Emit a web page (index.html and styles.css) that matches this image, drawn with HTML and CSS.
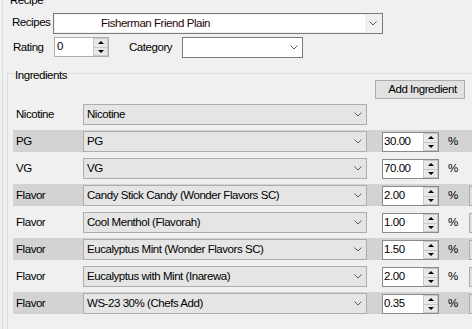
FILE: index.html
```html
<!DOCTYPE html>
<html lang="en">
<head>
    <meta charset="UTF-8">
    <meta name="viewport" content="width=device-width, initial-scale=1.0">
    <title>Recipe</title>
    <link rel="stylesheet" href="styles.css">
</head>
<body>
    <div class="group recipe-group">
        <span class="group-title">Recipe</span>
        <div class="field-row">
            <label class="lbl lbl-recipes">Recipes</label>
            <div class="combo combo-recipes">
                <span class="combo-text">Fisherman Friend Plain</span>
                <span class="chev"><svg width="8" height="5" viewBox="0 0 8 5"><polyline points="0.5,0.5 4,4 7.5,0.5" fill="none" stroke="#5a5a5a" stroke-width="1"/></svg></span>
            </div>
        </div>
        <div class="field-row row-rating">
            <label class="lbl lbl-rating">Rating</label>
            <div class="spin spin-rating">
                <span class="spin-value">0</span>
                <span class="spin-btns"><span class="spin-btn"><i class="arr-up"></i></span><span class="spin-btn"><i class="arr-down"></i></span></span>
            </div>
            <label class="lbl lbl-category">Category</label>
            <div class="combo combo-category">
                <span class="combo-text"></span>
                <span class="chev"><svg width="8" height="5" viewBox="0 0 8 5"><polyline points="0.5,0.5 4,4 7.5,0.5" fill="none" stroke="#5a5a5a" stroke-width="1"/></svg></span>
            </div>
        </div>

        <div class="group ing-group">
            <span class="group-title">Ingredients</span>
            <div class="ing-toolbar">
                <button class="btn-add">Add Ingredient</button>
            </div>
            <div class="ing-list" id="ingList"></div>
        </div>
    </div>

    <script>
        const ingredients = [
            { type: 'Nicotine', name: 'Nicotine', value: null },
            { type: 'PG', name: 'PG', value: '30.00' },
            { type: 'VG', name: 'VG', value: '70.00' },
            { type: 'Flavor', name: 'Candy Stick Candy (Wonder Flavors SC)', value: '2.00' },
            { type: 'Flavor', name: 'Cool Menthol (Flavorah)', value: '1.00' },
            { type: 'Flavor', name: 'Eucalyptus Mint (Wonder Flavors SC)', value: '1.50' },
            { type: 'Flavor', name: 'Eucalyptus with Mint (Inarewa)', value: '2.00' },
            { type: 'Flavor', name: 'WS-23 30% (Chefs Add)', value: '0.35' }
        ];
        const chev = '<span class="chev"><svg width="8" height="5" viewBox="0 0 8 5"><polyline points="0.5,0.5 4,4 7.5,0.5" fill="none" stroke="#5a5a5a" stroke-width="1"/></svg></span>';
        const list = document.getElementById('ingList');

        ingredients.forEach(function(ing, i) {
            const row = document.createElement('div');
            row.className = 'ing-row' + (i % 2 === 1 ? ' alt' : '');
            let html = '<span class="ing-name">' + ing.type + '</span>' +
                '<div class="combo ing-combo"><span class="combo-text">' + ing.name + '</span>' + chev + '</div>';
            if (ing.value !== null) {
                html += '<div class="spin num"><span class="spin-value">' + ing.value + '</span>' +
                    '<span class="spin-btns"><span class="spin-btn"><i class="arr-up"></i></span><span class="spin-btn"><i class="arr-down"></i></span></span></div>' +
                    '<span class="pct">%</span>';
            }
            if (ing.type === 'Flavor') {
                html += '<span class="extra"></span>'; // edit button, cut off by the window
            }
            row.innerHTML = html;
            list.appendChild(row);
        });
    </script>
</body>
</html>
```

FILE: styles.css
```css
body {
    margin: 0;
    width: 472px;
    height: 329px;
    overflow: hidden;
    background-color: #f0f0f0;
    color: #000000;
    font-family: "Liberation Sans", Arial, sans-serif;
    font-size: 11.5px;
    letter-spacing: -0.45px;
}
.group {
    position: relative;
    box-sizing: border-box;
    border: 1px solid #dcdcdc;
    border-right: none;
    border-bottom: none;
}
.group-title {
    position: absolute;
    top: -5px;
    left: 6px;
    padding: 0 1px;
    line-height: 13px;
    background-color: #f0f0f0;
}
.recipe-group {
    margin: -2px 0 0 2px;
    padding-top: 14px;
    width: 470px;
    height: 331px;
}
.field-row {
    display: flex;
    align-items: flex-start;
    height: 21px;
}
.row-rating {
    margin-top: 3px;
}
.lbl {
    line-height: 21px;
}
.lbl-recipes {
    margin-left: 9px;
    width: 41px;
    line-height: 19px;
}
.lbl-rating {
    margin-left: 10px;
    width: 41px;
}
.lbl-category {
    margin-left: 20px;
    width: 53px;
}

/* combo boxes */
.combo {
    box-sizing: border-box;
    display: flex;
    height: 21px;
    border: 1px solid #7a7a7a;
    background-color: #ffffff;
}
.combo-text {
    flex: 1;
    white-space: nowrap;
    overflow: hidden;
    line-height: 19px;
}
.chev {
    width: 17px;
    flex: none;
    display: flex;
    align-items: center;
    justify-content: center;
}
.chev svg {
    display: block;
}
.combo-recipes {
    width: 330px;
    padding: 1px;
    background-color: #f0f0f0;
}
.combo-recipes .combo-text {
    background-color: #ffffff;
    padding-left: 46px;
    line-height: 17px;
    color: #1e0505;
}
.combo-recipes .chev {
    width: 16px;
}
.combo-category {
    width: 121px;
}

/* numeric up/down */
.spin {
    box-sizing: border-box;
    display: flex;
    height: 20px;
    border: 1px solid #8a8a8a;
    background-color: #ffffff;
}
.spin-rating {
    width: 55px;
    border-color: #abadb3;
}
.spin-value {
    flex: 1;
    padding-left: 2px;
    line-height: 17px;
}
.spin-btns {
    width: 15px;
    display: flex;
    flex-direction: column;
    box-sizing: border-box;
    border: 1px solid #c8c8c8;
    background-color: #e8e8e8;
}
.spin-btn {
    flex: 1;
    display: flex;
    align-items: center;
    justify-content: center;
}
.spin-btn + .spin-btn {
    border-top: 1px solid #c8c8c8;
}
.arr-up {
    width: 0;
    height: 0;
    border-left: 3px solid transparent;
    border-right: 3px solid transparent;
    border-bottom: 3px solid #000000;
}
.arr-down {
    width: 0;
    height: 0;
    border-left: 3px solid transparent;
    border-right: 3px solid transparent;
    border-top: 3px solid #000000;
}

/* ingredients */
.ing-group {
    margin: 15px 0 0 4px;
    width: 465px;
    height: 256px;
}
.ing-toolbar {
    padding: 6px 0 0 367px;
    height: 19px;
}
.btn-add {
    box-sizing: border-box;
    width: 90px;
    height: 19px;
    padding: 0 0 0 5px;
    border: 1px solid #adadad;
    background-color: #e1e1e1;
    color: #000000;
    font-family: inherit;
    font-size: 11.5px;
    letter-spacing: -0.45px;
    line-height: 17px;
}
.ing-list {
    margin-top: 4px;
}
.ing-row {
    display: flex;
    align-items: flex-start;
    height: 22px;
    margin: 0 0 5px 5px;
}
.ing-row.alt {
    background-color: #d3d3d3;
}
.ing-name {
    width: 67px;
    padding-left: 3px;
    line-height: 22px;
}
.ing-combo {
    width: 284px;
    margin-top: 1px;
    border-color: #adadad;
    background-color: #e5e5e5;
}
.ing-combo .combo-text {
    padding-left: 3px;
}
.num {
    width: 57px;
    margin: 2px 0 0 15px;
}
.num .spin-value {
    padding-left: 1px;
}
.pct {
    width: 21px;
    margin: 2px 0 0 9px;
    line-height: 19px;
}
.extra {
    box-sizing: border-box;
    flex: 1;
    height: 20px;
    margin-top: 2px;
    border: 1px solid #adadad;
    border-right: none;
    background-color: #e1e1e1;
}
```
